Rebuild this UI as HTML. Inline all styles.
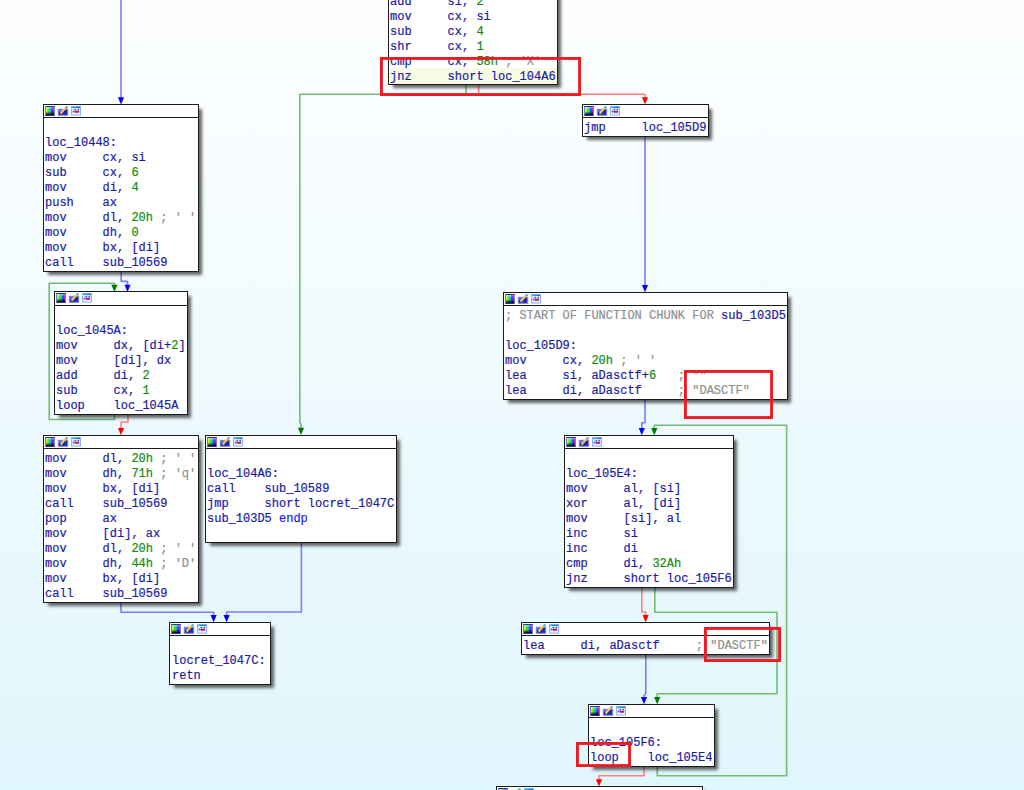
<!DOCTYPE html>
<html><head><meta charset="utf-8"><style>
html,body{margin:0;padding:0;}
body{width:1024px;height:790px;overflow:hidden;position:relative;background:linear-gradient(to bottom,#fdfeff 0%,#eefafd 50%,#dff6fc 100%);}
.edges{position:absolute;left:0;top:0;z-index:1;}
.box{position:absolute;box-sizing:border-box;border:1px solid #1c1c1c;background:#fff;box-shadow:4px 4px 3px -1px rgba(0,0,0,.6);z-index:2;overflow:hidden;}
.hd{position:absolute;left:0;top:0;right:0;height:12px;border-bottom:1px solid #1c1c1c;}
.ic{position:absolute;left:1px;top:1px;}
.tx{position:absolute;left:1px;right:0;font-family:"Liberation Mono",monospace;font-size:12px;line-height:15px;white-space:pre;color:#1c1ca2;-webkit-text-stroke:0.2px currentColor;}
.tx div{height:15px;}
.tx .hl{background:#f8fbe3;margin-top:-2px;padding-top:2px;}
i{font-style:normal;}
i.n{color:#108c10;}
i.c{color:#909090;}
i.k{color:#2020ff;}
</style></head><body>
<svg width="0" height="0" style="position:absolute"><defs>
<linearGradient id="rb" x1="0" x2="1" y1="0" y2="0">
<stop offset="0" stop-color="#fff030"/><stop offset=".22" stop-color="#70f020"/><stop offset=".42" stop-color="#10e070"/><stop offset=".58" stop-color="#10b0e8"/><stop offset=".75" stop-color="#3020f0"/><stop offset=".9" stop-color="#e010e0"/><stop offset="1" stop-color="#a02090"/>
</linearGradient>
<linearGradient id="dk" x1="0" x2="0" y1="0" y2="1">
<stop offset="0" stop-color="#fff" stop-opacity=".45"/><stop offset=".35" stop-color="#fff" stop-opacity="0"/><stop offset=".55" stop-color="#000" stop-opacity="0"/><stop offset="1" stop-color="#000020" stop-opacity="1"/>
</linearGradient>
<linearGradient id="tb" x1="0" x2="1" y1="0" y2="0">
<stop offset="0" stop-color="#20c8f4"/><stop offset="1" stop-color="#2058e0"/>
</linearGradient>
</defs></svg>
<svg class="edges" width="1024" height="790"><path d="M121 -2 L121 98" stroke="#7c7cff" fill="none" stroke-width="1.6" stroke-linejoin="round"/><path d="M117.9 97.3 L124.1 97.3 L121 104.5 Z" fill="#0000ff"/><path d="M466 85 L466 94.2 L299.8 94.2 L299.8 422.5 L301 424 L301 429" stroke="#74bb74" fill="none" stroke-width="1.6" stroke-linejoin="round"/><path d="M297.9 427.8 L304.1 427.8 L301 435 Z" fill="#007800"/><path d="M478.6 85 L478.6 94.3 L645 94.3 L645 98" stroke="#ff8080" fill="none" stroke-width="1.6" stroke-linejoin="round"/><path d="M641.9 97.3 L648.1 97.3 L645 104.5 Z" fill="#ff0000"/><path d="M645 137 L645 286" stroke="#7c7cff" fill="none" stroke-width="1.6" stroke-linejoin="round"/><path d="M641.9 285.1 L648.1 285.1 L645 292.3 Z" fill="#0000ff"/><path d="M121.2 272 L121.2 281.4 L127.5 281.4 L127.5 286" stroke="#7c7cff" fill="none" stroke-width="1.6" stroke-linejoin="round"/><path d="M124.4 284.8 L130.6 284.8 L127.5 292 Z" fill="#0000ff"/><path d="M114.6 415 L114.6 419.5 L49.2 419.5 L49.2 283.2 L114.4 283.2 L114.4 286" stroke="#74bb74" fill="none" stroke-width="1.6" stroke-linejoin="round"/><path d="M111.3 284.8 L117.5 284.8 L114.4 292 Z" fill="#007800"/><path d="M128 415 L128 422 L121 422 L121 429" stroke="#ff8080" fill="none" stroke-width="1.6" stroke-linejoin="round"/><path d="M117.9 428.1 L124.1 428.1 L121 435.3 Z" fill="#ff0000"/><path d="M121 603 L121 612.2 L213.6 612.2 L213.6 616" stroke="#7c7cff" fill="none" stroke-width="1.6" stroke-linejoin="round"/><path d="M210.5 615.1 L216.7 615.1 L213.6 622.3 Z" fill="#0000ff"/><path d="M301.4 543 L301.4 612 L226.6 612 L226.6 616" stroke="#7c7cff" fill="none" stroke-width="1.6" stroke-linejoin="round"/><path d="M223.5 615.1 L229.7 615.1 L226.6 622.3 Z" fill="#0000ff"/><path d="M645 400 L645 422.8 L641.8 422.8 L641.8 429" stroke="#7c7cff" fill="none" stroke-width="1.6" stroke-linejoin="round"/><path d="M638.7 428.1 L644.9 428.1 L641.8 435.3 Z" fill="#0000ff"/><path d="M657.3 767 L657.3 775.7 L786.6 775.7 L786.6 425.3 L654.3 425.3 L654.3 429" stroke="#74bb74" fill="none" stroke-width="1.6" stroke-linejoin="round"/><path d="M651.2 428.1 L657.4 428.1 L654.3 435.3 Z" fill="#007800"/><path d="M641.8 588 L641.8 612 L645.6 612 L645.6 616" stroke="#ff8080" fill="none" stroke-width="1.6" stroke-linejoin="round"/><path d="M642.5 615.1 L648.7 615.1 L645.6 622.3 Z" fill="#ff0000"/><path d="M654.8 588 L654.8 612.2 L777 612.2 L777 693.8 L657.2 693.8 L657.2 698" stroke="#74bb74" fill="none" stroke-width="1.6" stroke-linejoin="round"/><path d="M654.1 697.1 L660.3 697.1 L657.2 704.3 Z" fill="#007800"/><path d="M645.8 655 L645.8 693.5 L644 695.5 L644 698" stroke="#7c7cff" fill="none" stroke-width="1.6" stroke-linejoin="round"/><path d="M640.9 697.1 L647.1 697.1 L644 704.3 Z" fill="#0000ff"/><path d="M644 767 L644 775.7 L599 775.7 L599 780" stroke="#ff8080" fill="none" stroke-width="1.6" stroke-linejoin="round"/><path d="M595.9 779.3 L602.1 779.3 L599 786.5 Z" fill="#ff0000"/></svg>
<div class="box" style="left:388px;top:-100px;width:170px;height:185px"><div class="tx" style="top:94px;left:1px"><div>add     si, <i class="n">2</i></div><div>mov     cx, si</div><div>sub     cx, <i class="n">4</i></div><div>shr     cx, <i class="n">1</i></div><div>cmp     cx, <i class="n">58h</i> <i class="c">; 'X'</i></div><div class="hl">jnz     short loc_104A6</div></div></div>
<div class="box" style="left:43px;top:104px;width:156px;height:168px"><div class="hd"><svg class="ic" width="40" height="11" viewBox="0 0 40 11">
<rect x="0.5" y="0.5" width="9" height="9" fill="#6a6ad0" stroke="#7a7ad0" stroke-width="1"/><path d="M0.5 0.5 H9.5 M0.5 9.5 H9.5" stroke="#30309a" stroke-width="1"/>
<rect x="1" y="1" width="8" height="8" fill="url(#rb)"/>
<rect x="1" y="1" width="8" height="8" fill="url(#dk)"/>
<rect x="13.3" y="3.3" width="9.4" height="6" fill="#1828b8" stroke="#7c84dc" stroke-width="1"/>
<rect x="14" y="4" width="4" height="2" fill="#5a70e0"/>
<path d="M15.6 7.6 L20.6 1.6" stroke="#f8d060" stroke-width="2"/>
<path d="M16.2 8.2 L21 2.4" stroke="#f09020" stroke-width="0.9"/>
<circle cx="21.6" cy="1.2" r="1.2" fill="#58a8d0"/>
<rect x="26.5" y="0.5" width="9" height="8.6" fill="#e6ecff" stroke="#8ab4f0" stroke-width="1"/>
<rect x="27" y="0.8" width="8" height="1.2" fill="url(#tb)"/>
<circle cx="30.3" cy="3.6" r="0.9" fill="#3a50f0"/>
<circle cx="33.3" cy="3.6" r="0.9" fill="#3a50f0"/>
<circle cx="28.6" cy="5.6" r="1" fill="#4a5af8"/>
<rect x="29.6" y="4.8" width="4.6" height="2" rx="0.8" fill="#b82048"/>
<rect x="29" y="7.4" width="5.8" height="0.9" fill="#c8f0ff"/>
</svg></div><div class="tx" style="top:16px;left:1px"><div>&nbsp;</div><div>loc_10448:</div><div>mov     cx, si</div><div>sub     cx, <i class="n">6</i></div><div>mov     di, <i class="n">4</i></div><div>push    ax</div><div>mov     dl, <i class="n">20h</i> <i class="c">; ' '</i></div><div>mov     dh, <i class="n">0</i></div><div>mov     bx, [di]</div><div>call    sub_10569</div></div></div>
<div class="box" style="left:582px;top:104px;width:127px;height:33px"><div class="hd"><svg class="ic" width="40" height="11" viewBox="0 0 40 11">
<rect x="0.5" y="0.5" width="9" height="9" fill="#6a6ad0" stroke="#7a7ad0" stroke-width="1"/><path d="M0.5 0.5 H9.5 M0.5 9.5 H9.5" stroke="#30309a" stroke-width="1"/>
<rect x="1" y="1" width="8" height="8" fill="url(#rb)"/>
<rect x="1" y="1" width="8" height="8" fill="url(#dk)"/>
<rect x="13.3" y="3.3" width="9.4" height="6" fill="#1828b8" stroke="#7c84dc" stroke-width="1"/>
<rect x="14" y="4" width="4" height="2" fill="#5a70e0"/>
<path d="M15.6 7.6 L20.6 1.6" stroke="#f8d060" stroke-width="2"/>
<path d="M16.2 8.2 L21 2.4" stroke="#f09020" stroke-width="0.9"/>
<circle cx="21.6" cy="1.2" r="1.2" fill="#58a8d0"/>
<rect x="26.5" y="0.5" width="9" height="8.6" fill="#e6ecff" stroke="#8ab4f0" stroke-width="1"/>
<rect x="27" y="0.8" width="8" height="1.2" fill="url(#tb)"/>
<circle cx="30.3" cy="3.6" r="0.9" fill="#3a50f0"/>
<circle cx="33.3" cy="3.6" r="0.9" fill="#3a50f0"/>
<circle cx="28.6" cy="5.6" r="1" fill="#4a5af8"/>
<rect x="29.6" y="4.8" width="4.6" height="2" rx="0.8" fill="#b82048"/>
<rect x="29" y="7.4" width="5.8" height="0.9" fill="#c8f0ff"/>
</svg></div><div class="tx" style="top:16px;left:1px"><div>jmp     loc_105D9</div></div></div>
<div class="box" style="left:54px;top:291px;width:134px;height:124px"><div class="hd" style="height:13px"><svg class="ic" width="40" height="11" viewBox="0 0 40 11">
<rect x="0.5" y="0.5" width="9" height="9" fill="#6a6ad0" stroke="#7a7ad0" stroke-width="1"/><path d="M0.5 0.5 H9.5 M0.5 9.5 H9.5" stroke="#30309a" stroke-width="1"/>
<rect x="1" y="1" width="8" height="8" fill="url(#rb)"/>
<rect x="1" y="1" width="8" height="8" fill="url(#dk)"/>
<rect x="13.3" y="3.3" width="9.4" height="6" fill="#1828b8" stroke="#7c84dc" stroke-width="1"/>
<rect x="14" y="4" width="4" height="2" fill="#5a70e0"/>
<path d="M15.6 7.6 L20.6 1.6" stroke="#f8d060" stroke-width="2"/>
<path d="M16.2 8.2 L21 2.4" stroke="#f09020" stroke-width="0.9"/>
<circle cx="21.6" cy="1.2" r="1.2" fill="#58a8d0"/>
<rect x="26.5" y="0.5" width="9" height="8.6" fill="#e6ecff" stroke="#8ab4f0" stroke-width="1"/>
<rect x="27" y="0.8" width="8" height="1.2" fill="url(#tb)"/>
<circle cx="30.3" cy="3.6" r="0.9" fill="#3a50f0"/>
<circle cx="33.3" cy="3.6" r="0.9" fill="#3a50f0"/>
<circle cx="28.6" cy="5.6" r="1" fill="#4a5af8"/>
<rect x="29.6" y="4.8" width="4.6" height="2" rx="0.8" fill="#b82048"/>
<rect x="29" y="7.4" width="5.8" height="0.9" fill="#c8f0ff"/>
</svg></div><div class="tx" style="top:17px;left:1px"><div>&nbsp;</div><div>loc_1045A:</div><div>mov     dx, [di+<i class="n">2</i>]</div><div>mov     [di], dx</div><div>add     di, <i class="n">2</i></div><div>sub     cx, <i class="n">1</i></div><div>loop    loc_1045A</div></div></div>
<div class="box" style="left:43px;top:435px;width:156px;height:168px"><div class="hd"><svg class="ic" width="40" height="11" viewBox="0 0 40 11">
<rect x="0.5" y="0.5" width="9" height="9" fill="#6a6ad0" stroke="#7a7ad0" stroke-width="1"/><path d="M0.5 0.5 H9.5 M0.5 9.5 H9.5" stroke="#30309a" stroke-width="1"/>
<rect x="1" y="1" width="8" height="8" fill="url(#rb)"/>
<rect x="1" y="1" width="8" height="8" fill="url(#dk)"/>
<rect x="13.3" y="3.3" width="9.4" height="6" fill="#1828b8" stroke="#7c84dc" stroke-width="1"/>
<rect x="14" y="4" width="4" height="2" fill="#5a70e0"/>
<path d="M15.6 7.6 L20.6 1.6" stroke="#f8d060" stroke-width="2"/>
<path d="M16.2 8.2 L21 2.4" stroke="#f09020" stroke-width="0.9"/>
<circle cx="21.6" cy="1.2" r="1.2" fill="#58a8d0"/>
<rect x="26.5" y="0.5" width="9" height="8.6" fill="#e6ecff" stroke="#8ab4f0" stroke-width="1"/>
<rect x="27" y="0.8" width="8" height="1.2" fill="url(#tb)"/>
<circle cx="30.3" cy="3.6" r="0.9" fill="#3a50f0"/>
<circle cx="33.3" cy="3.6" r="0.9" fill="#3a50f0"/>
<circle cx="28.6" cy="5.6" r="1" fill="#4a5af8"/>
<rect x="29.6" y="4.8" width="4.6" height="2" rx="0.8" fill="#b82048"/>
<rect x="29" y="7.4" width="5.8" height="0.9" fill="#c8f0ff"/>
</svg></div><div class="tx" style="top:16px;left:1px"><div>mov     dl, <i class="n">20h</i> <i class="c">; ' '</i></div><div>mov     dh, <i class="n">71h</i> <i class="c">; 'q'</i></div><div>mov     bx, [di]</div><div>call    sub_10569</div><div>pop     ax</div><div>mov     [di], ax</div><div>mov     dl, <i class="n">20h</i> <i class="c">; ' '</i></div><div>mov     dh, <i class="n">44h</i> <i class="c">; 'D'</i></div><div>mov     bx, [di]</div><div>call    sub_10569</div></div></div>
<div class="box" style="left:205px;top:435px;width:192px;height:108px"><div class="hd"><svg class="ic" width="40" height="11" viewBox="0 0 40 11">
<rect x="0.5" y="0.5" width="9" height="9" fill="#6a6ad0" stroke="#7a7ad0" stroke-width="1"/><path d="M0.5 0.5 H9.5 M0.5 9.5 H9.5" stroke="#30309a" stroke-width="1"/>
<rect x="1" y="1" width="8" height="8" fill="url(#rb)"/>
<rect x="1" y="1" width="8" height="8" fill="url(#dk)"/>
<rect x="13.3" y="3.3" width="9.4" height="6" fill="#1828b8" stroke="#7c84dc" stroke-width="1"/>
<rect x="14" y="4" width="4" height="2" fill="#5a70e0"/>
<path d="M15.6 7.6 L20.6 1.6" stroke="#f8d060" stroke-width="2"/>
<path d="M16.2 8.2 L21 2.4" stroke="#f09020" stroke-width="0.9"/>
<circle cx="21.6" cy="1.2" r="1.2" fill="#58a8d0"/>
<rect x="26.5" y="0.5" width="9" height="8.6" fill="#e6ecff" stroke="#8ab4f0" stroke-width="1"/>
<rect x="27" y="0.8" width="8" height="1.2" fill="url(#tb)"/>
<circle cx="30.3" cy="3.6" r="0.9" fill="#3a50f0"/>
<circle cx="33.3" cy="3.6" r="0.9" fill="#3a50f0"/>
<circle cx="28.6" cy="5.6" r="1" fill="#4a5af8"/>
<rect x="29.6" y="4.8" width="4.6" height="2" rx="0.8" fill="#b82048"/>
<rect x="29" y="7.4" width="5.8" height="0.9" fill="#c8f0ff"/>
</svg></div><div class="tx" style="top:16px;left:1px"><div>&nbsp;</div><div>loc_104A6:</div><div>call    sub_10589</div><div>jmp     short locret_1047C</div><div>sub_103D5 <i class="k">endp</i></div><div>&nbsp;</div></div></div>
<div class="box" style="left:169px;top:622px;width:102px;height:63px"><div class="hd"><svg class="ic" width="40" height="11" viewBox="0 0 40 11">
<rect x="0.5" y="0.5" width="9" height="9" fill="#6a6ad0" stroke="#7a7ad0" stroke-width="1"/><path d="M0.5 0.5 H9.5 M0.5 9.5 H9.5" stroke="#30309a" stroke-width="1"/>
<rect x="1" y="1" width="8" height="8" fill="url(#rb)"/>
<rect x="1" y="1" width="8" height="8" fill="url(#dk)"/>
<rect x="13.3" y="3.3" width="9.4" height="6" fill="#1828b8" stroke="#7c84dc" stroke-width="1"/>
<rect x="14" y="4" width="4" height="2" fill="#5a70e0"/>
<path d="M15.6 7.6 L20.6 1.6" stroke="#f8d060" stroke-width="2"/>
<path d="M16.2 8.2 L21 2.4" stroke="#f09020" stroke-width="0.9"/>
<circle cx="21.6" cy="1.2" r="1.2" fill="#58a8d0"/>
<rect x="26.5" y="0.5" width="9" height="8.6" fill="#e6ecff" stroke="#8ab4f0" stroke-width="1"/>
<rect x="27" y="0.8" width="8" height="1.2" fill="url(#tb)"/>
<circle cx="30.3" cy="3.6" r="0.9" fill="#3a50f0"/>
<circle cx="33.3" cy="3.6" r="0.9" fill="#3a50f0"/>
<circle cx="28.6" cy="5.6" r="1" fill="#4a5af8"/>
<rect x="29.6" y="4.8" width="4.6" height="2" rx="0.8" fill="#b82048"/>
<rect x="29" y="7.4" width="5.8" height="0.9" fill="#c8f0ff"/>
</svg></div><div class="tx" style="top:16px;left:2px"><div>&nbsp;</div><div>locret_1047C:</div><div>retn</div></div></div>
<div class="box" style="left:503px;top:292px;width:285px;height:108px"><div class="hd"><svg class="ic" width="40" height="11" viewBox="0 0 40 11">
<rect x="0.5" y="0.5" width="9" height="9" fill="#6a6ad0" stroke="#7a7ad0" stroke-width="1"/><path d="M0.5 0.5 H9.5 M0.5 9.5 H9.5" stroke="#30309a" stroke-width="1"/>
<rect x="1" y="1" width="8" height="8" fill="url(#rb)"/>
<rect x="1" y="1" width="8" height="8" fill="url(#dk)"/>
<rect x="13.3" y="3.3" width="9.4" height="6" fill="#1828b8" stroke="#7c84dc" stroke-width="1"/>
<rect x="14" y="4" width="4" height="2" fill="#5a70e0"/>
<path d="M15.6 7.6 L20.6 1.6" stroke="#f8d060" stroke-width="2"/>
<path d="M16.2 8.2 L21 2.4" stroke="#f09020" stroke-width="0.9"/>
<circle cx="21.6" cy="1.2" r="1.2" fill="#58a8d0"/>
<rect x="26.5" y="0.5" width="9" height="8.6" fill="#e6ecff" stroke="#8ab4f0" stroke-width="1"/>
<rect x="27" y="0.8" width="8" height="1.2" fill="url(#tb)"/>
<circle cx="30.3" cy="3.6" r="0.9" fill="#3a50f0"/>
<circle cx="33.3" cy="3.6" r="0.9" fill="#3a50f0"/>
<circle cx="28.6" cy="5.6" r="1" fill="#4a5af8"/>
<rect x="29.6" y="4.8" width="4.6" height="2" rx="0.8" fill="#b82048"/>
<rect x="29" y="7.4" width="5.8" height="0.9" fill="#c8f0ff"/>
</svg></div><div class="tx" style="top:16px;left:1px"><div><i class="c">; START OF FUNCTION CHUNK FOR </i>sub_103D5</div><div>&nbsp;</div><div>loc_105D9:</div><div>mov     cx, <i class="n">20h</i> <i class="c">; ' '</i></div><div>lea     si, aDasctf+<i class="n">6</i>   <i class="c">; ""</i></div><div>lea     di, aDasctf     <i class="c">; "DASCTF"</i></div></div></div>
<div class="box" style="left:564px;top:435px;width:170px;height:153px"><div class="hd"><svg class="ic" width="40" height="11" viewBox="0 0 40 11">
<rect x="0.5" y="0.5" width="9" height="9" fill="#6a6ad0" stroke="#7a7ad0" stroke-width="1"/><path d="M0.5 0.5 H9.5 M0.5 9.5 H9.5" stroke="#30309a" stroke-width="1"/>
<rect x="1" y="1" width="8" height="8" fill="url(#rb)"/>
<rect x="1" y="1" width="8" height="8" fill="url(#dk)"/>
<rect x="13.3" y="3.3" width="9.4" height="6" fill="#1828b8" stroke="#7c84dc" stroke-width="1"/>
<rect x="14" y="4" width="4" height="2" fill="#5a70e0"/>
<path d="M15.6 7.6 L20.6 1.6" stroke="#f8d060" stroke-width="2"/>
<path d="M16.2 8.2 L21 2.4" stroke="#f09020" stroke-width="0.9"/>
<circle cx="21.6" cy="1.2" r="1.2" fill="#58a8d0"/>
<rect x="26.5" y="0.5" width="9" height="8.6" fill="#e6ecff" stroke="#8ab4f0" stroke-width="1"/>
<rect x="27" y="0.8" width="8" height="1.2" fill="url(#tb)"/>
<circle cx="30.3" cy="3.6" r="0.9" fill="#3a50f0"/>
<circle cx="33.3" cy="3.6" r="0.9" fill="#3a50f0"/>
<circle cx="28.6" cy="5.6" r="1" fill="#4a5af8"/>
<rect x="29.6" y="4.8" width="4.6" height="2" rx="0.8" fill="#b82048"/>
<rect x="29" y="7.4" width="5.8" height="0.9" fill="#c8f0ff"/>
</svg></div><div class="tx" style="top:16px;left:1px"><div>&nbsp;</div><div>loc_105E4:</div><div>mov     al, [si]</div><div>xor     al, [di]</div><div>mov     [si], al</div><div>inc     si</div><div>inc     di</div><div>cmp     di, <i class="n">32Ah</i></div><div>jnz     short loc_105F6</div></div></div>
<div class="box" style="left:521px;top:622px;width:249px;height:33px"><div class="hd"><svg class="ic" width="40" height="11" viewBox="0 0 40 11">
<rect x="0.5" y="0.5" width="9" height="9" fill="#6a6ad0" stroke="#7a7ad0" stroke-width="1"/><path d="M0.5 0.5 H9.5 M0.5 9.5 H9.5" stroke="#30309a" stroke-width="1"/>
<rect x="1" y="1" width="8" height="8" fill="url(#rb)"/>
<rect x="1" y="1" width="8" height="8" fill="url(#dk)"/>
<rect x="13.3" y="3.3" width="9.4" height="6" fill="#1828b8" stroke="#7c84dc" stroke-width="1"/>
<rect x="14" y="4" width="4" height="2" fill="#5a70e0"/>
<path d="M15.6 7.6 L20.6 1.6" stroke="#f8d060" stroke-width="2"/>
<path d="M16.2 8.2 L21 2.4" stroke="#f09020" stroke-width="0.9"/>
<circle cx="21.6" cy="1.2" r="1.2" fill="#58a8d0"/>
<rect x="26.5" y="0.5" width="9" height="8.6" fill="#e6ecff" stroke="#8ab4f0" stroke-width="1"/>
<rect x="27" y="0.8" width="8" height="1.2" fill="url(#tb)"/>
<circle cx="30.3" cy="3.6" r="0.9" fill="#3a50f0"/>
<circle cx="33.3" cy="3.6" r="0.9" fill="#3a50f0"/>
<circle cx="28.6" cy="5.6" r="1" fill="#4a5af8"/>
<rect x="29.6" y="4.8" width="4.6" height="2" rx="0.8" fill="#b82048"/>
<rect x="29" y="7.4" width="5.8" height="0.9" fill="#c8f0ff"/>
</svg></div><div class="tx" style="top:16px;left:1px"><div>lea     di, aDasctf     <i class="c">; "DASCTF"</i></div></div></div>
<div class="box" style="left:588px;top:704px;width:127px;height:63px"><div class="hd"><svg class="ic" width="40" height="11" viewBox="0 0 40 11">
<rect x="0.5" y="0.5" width="9" height="9" fill="#6a6ad0" stroke="#7a7ad0" stroke-width="1"/><path d="M0.5 0.5 H9.5 M0.5 9.5 H9.5" stroke="#30309a" stroke-width="1"/>
<rect x="1" y="1" width="8" height="8" fill="url(#rb)"/>
<rect x="1" y="1" width="8" height="8" fill="url(#dk)"/>
<rect x="13.3" y="3.3" width="9.4" height="6" fill="#1828b8" stroke="#7c84dc" stroke-width="1"/>
<rect x="14" y="4" width="4" height="2" fill="#5a70e0"/>
<path d="M15.6 7.6 L20.6 1.6" stroke="#f8d060" stroke-width="2"/>
<path d="M16.2 8.2 L21 2.4" stroke="#f09020" stroke-width="0.9"/>
<circle cx="21.6" cy="1.2" r="1.2" fill="#58a8d0"/>
<rect x="26.5" y="0.5" width="9" height="8.6" fill="#e6ecff" stroke="#8ab4f0" stroke-width="1"/>
<rect x="27" y="0.8" width="8" height="1.2" fill="url(#tb)"/>
<circle cx="30.3" cy="3.6" r="0.9" fill="#3a50f0"/>
<circle cx="33.3" cy="3.6" r="0.9" fill="#3a50f0"/>
<circle cx="28.6" cy="5.6" r="1" fill="#4a5af8"/>
<rect x="29.6" y="4.8" width="4.6" height="2" rx="0.8" fill="#b82048"/>
<rect x="29" y="7.4" width="5.8" height="0.9" fill="#c8f0ff"/>
</svg></div><div class="tx" style="top:16px;left:1px"><div>&nbsp;</div><div>loc_105F6:</div><div>loop    loc_105E4</div></div></div>
<div class="box" style="left:496px;top:786px;width:207px;height:115px"><div class="hd"><svg class="ic" width="40" height="11" viewBox="0 0 40 11">
<rect x="0.5" y="0.5" width="9" height="9" fill="#6a6ad0" stroke="#7a7ad0" stroke-width="1"/><path d="M0.5 0.5 H9.5 M0.5 9.5 H9.5" stroke="#30309a" stroke-width="1"/>
<rect x="1" y="1" width="8" height="8" fill="url(#rb)"/>
<rect x="1" y="1" width="8" height="8" fill="url(#dk)"/>
<rect x="13.3" y="3.3" width="9.4" height="6" fill="#1828b8" stroke="#7c84dc" stroke-width="1"/>
<rect x="14" y="4" width="4" height="2" fill="#5a70e0"/>
<path d="M15.6 7.6 L20.6 1.6" stroke="#f8d060" stroke-width="2"/>
<path d="M16.2 8.2 L21 2.4" stroke="#f09020" stroke-width="0.9"/>
<circle cx="21.6" cy="1.2" r="1.2" fill="#58a8d0"/>
<rect x="26.5" y="0.5" width="9" height="8.6" fill="#e6ecff" stroke="#8ab4f0" stroke-width="1"/>
<rect x="27" y="0.8" width="8" height="1.2" fill="url(#tb)"/>
<circle cx="30.3" cy="3.6" r="0.9" fill="#3a50f0"/>
<circle cx="33.3" cy="3.6" r="0.9" fill="#3a50f0"/>
<circle cx="28.6" cy="5.6" r="1" fill="#4a5af8"/>
<rect x="29.6" y="4.8" width="4.6" height="2" rx="0.8" fill="#b82048"/>
<rect x="29" y="7.4" width="5.8" height="0.9" fill="#c8f0ff"/>
</svg></div><div class="tx" style="top:16px;left:1px"></div></div>
<svg class="edges" style="z-index:5" width="1024" height="790"><rect x="381.45" y="58.45" width="198.1" height="36.1" fill="none" stroke="#ed1c24" stroke-width="2.9"/><rect x="685.45" y="371.45" width="86.1" height="46.1" fill="none" stroke="#ed1c24" stroke-width="2.9"/><rect x="705.45" y="628.45" width="74.1" height="32.1" fill="none" stroke="#ed1c24" stroke-width="2.9"/><rect x="577.45" y="743.45" width="52.1" height="22.1" fill="none" stroke="#ed1c24" stroke-width="2.9"/></svg>
</body></html>
